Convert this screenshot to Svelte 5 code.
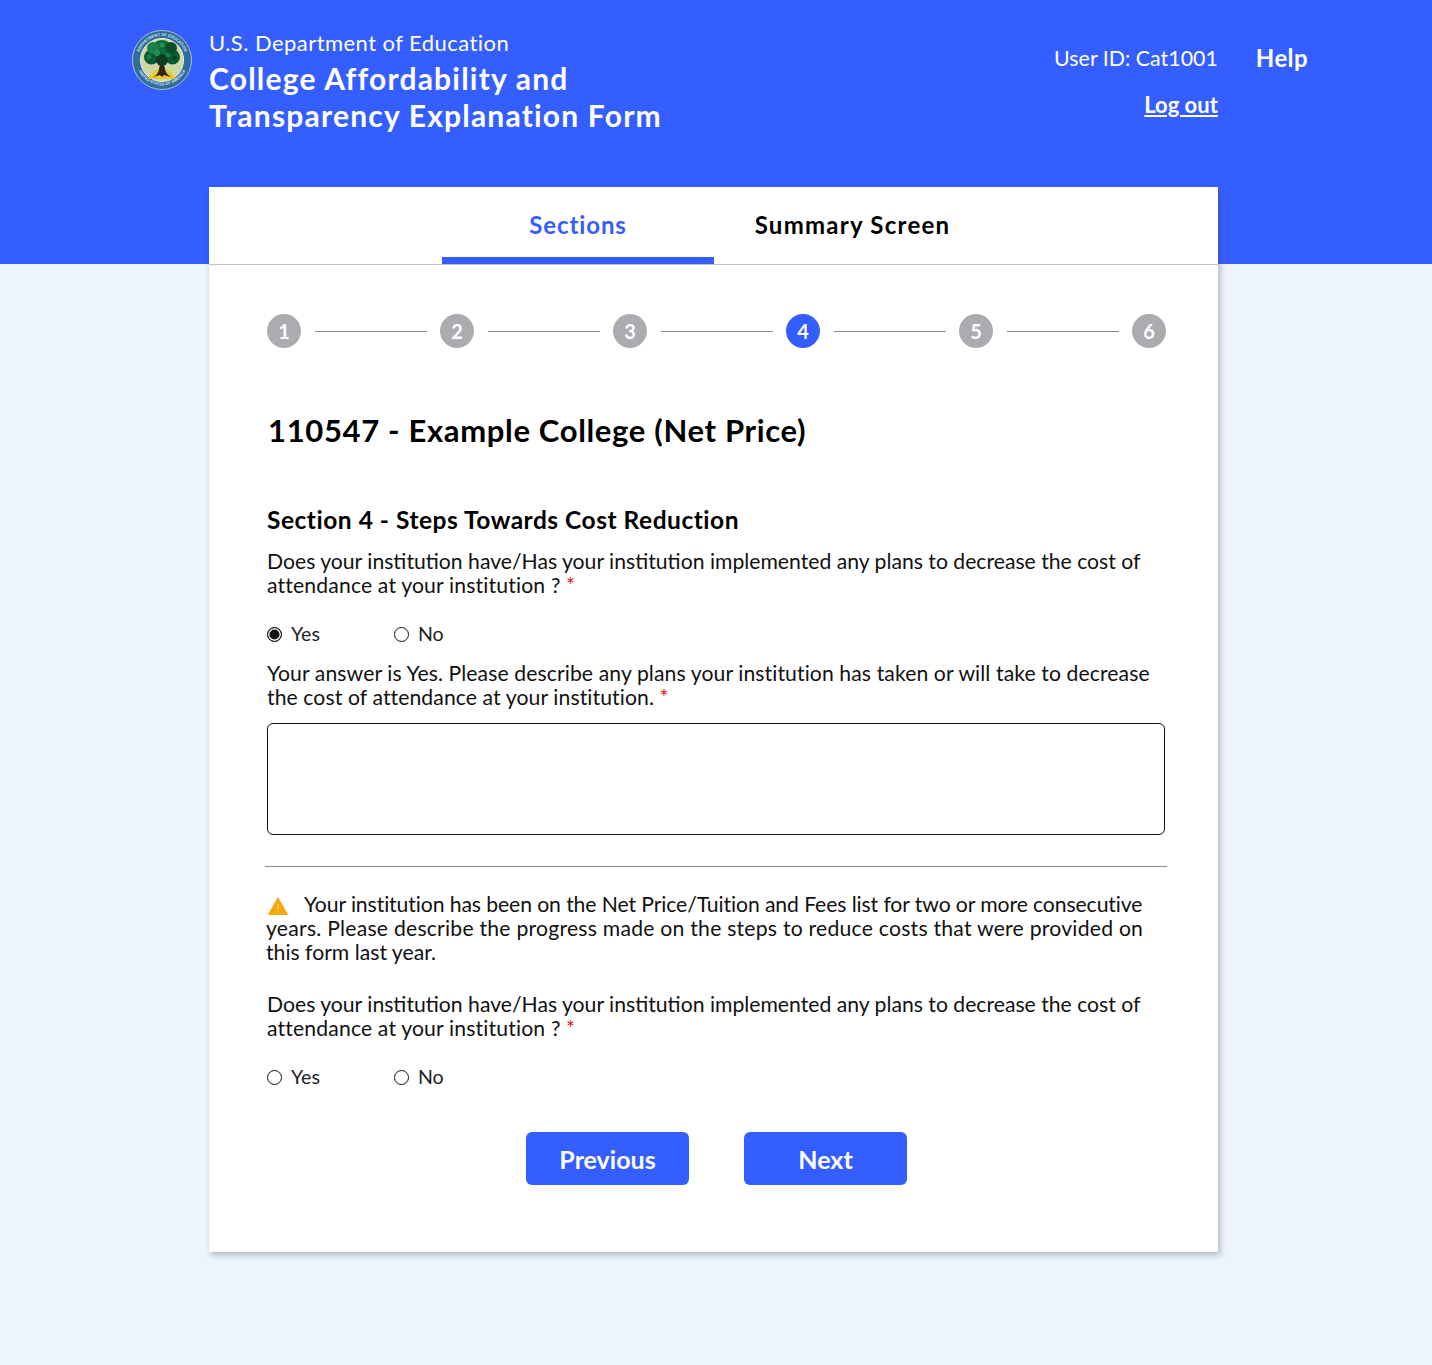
<script lang="ts">
	const steps = [1, 2, 3, 4, 5, 6];
	const current = 4;
	const question = 'Does your institution have/Has your institution implemented any plans to decrease the cost of';
	const questionEnd = 'attendance at your institution ?';
</script>

<div class="page">
	<header class="banner">
		<div class="banner__inner">
			<svg class="seal" viewBox="0 0 60 60" aria-hidden="true">
				<defs>
					<path id="seal-top" d="M9.2 42a24 24 0 1 1 41.6 0" />
					<path id="seal-bottom" d="M5 36a25.8 25.8 0 0 0 50 0" />
				</defs>
				<circle cx="30" cy="30" r="29.5" fill="#2f6d9c" stroke="#a9bfcc" stroke-width="1" />
				<circle cx="30" cy="30" r="21.5" fill="#cdd8a6" stroke="#eef2df" stroke-width="1" />
				<text class="seal__text" text-anchor="middle"><textPath href="#seal-top" startOffset="50%">DEPARTMENT OF EDUCATION</textPath></text>
				<text class="seal__text" text-anchor="middle"><textPath href="#seal-bottom" startOffset="50%">UNITED STATES OF AMERICA</textPath></text>
				<path d="M16 49h28l-5-7-6-3-2-8h-3l-2 8-5 3z" fill="#e6c92f" />
				<path d="M21 47c5-2 7-7 7-17h4c0 10 2 14 7 17l-7-2-2 2-2-2z" fill="#33241a" />
				<circle cx="30" cy="21" r="11" fill="#0e6b3a" />
				<circle cx="19.5" cy="27" r="7.5" fill="#0c5a32" />
				<circle cx="40.5" cy="27" r="7.5" fill="#0c5a32" />
				<circle cx="21" cy="18" r="6" fill="#1a8048" />
				<circle cx="39" cy="18" r="6" fill="#0a4f2b" />
				<circle cx="30" cy="30" r="6" fill="#0a3d22" />
				<circle cx="25" cy="23" r="3" fill="#23914f" />
				<circle cx="36" cy="25" r="2.5" fill="#1a8048" />
				<circle cx="30" cy="15" r="2.5" fill="#23914f" />
				<circle cx="17" cy="27" r="2.5" fill="#1a8048" />
				<circle cx="43" cy="28" r="2" fill="#0a3d22" />
			</svg>
			<div class="title">
				<p class="title__dept">U.S. Department of Education</p>
				<h1 class="title__form">College Affordability and<br />Transparency Explanation Form</h1>
			</div>
			<div class="account">
				<span class="account__user">User ID: Cat1001</span>
				<a class="account__logout" href="#logout">Log out</a>
			</div>
			<a class="help" href="#help">Help</a>
		</div>
	</header>

	<main class="card">
		<nav class="tabs">
			<a class="tab tab--active" href="#sections">Sections</a>
			<a class="tab tab--summary" href="#summary">Summary Screen</a>
		</nav>

		<div class="body">
			<ol class="stepper">
				{#each steps as step, i}
					{#if i > 0}<li class="stepper__line" aria-hidden="true"></li>{/if}
					<li class="stepper__dot" class:stepper__dot--on={step === current}>{step}</li>
				{/each}
			</ol>

			<h2 class="college">110547 - Example College (Net Price)</h2>
			<h3 class="section">Section 4 - Steps Towards Cost Reduction</h3>

			<p class="copy">
				{question}<br /><span class="wide">{questionEnd}</span> <span class="req">*</span>
			</p>

			<div class="radios radios--first">
				<label class="radio"><span class="radio__mark radio__mark--on"></span>Yes</label>
				<label class="radio"><span class="radio__mark"></span>No</label>
			</div>

			<p class="copy copy--answer">
				Your answer is Yes. Please describe any plans your institution has taken or will take to decrease<br />
				the cost of attendance at your institution. <span class="req">*</span>
			</p>

			<div class="answer" role="textbox" aria-label="Description"></div>

			<hr class="rule" />

			<p class="copy copy--notice">
				<svg class="warn" viewBox="0 0 20 18" aria-hidden="true">
					<path d="M10 .8 19.6 17.6H.4z" fill="#f5a70f" stroke="#f5a70f" stroke-linejoin="round" />
					<path d="M10 7v5.5M10 14v1.4" stroke="#ffd98a" stroke-width="1.2" />
				</svg><span class="tight">Your institution has been on the Net Price/Tuition and Fees list for two or more consecutive</span><br />
				<span class="loose">years. Please describe the progress made on the steps to reduce costs that were provided on</span><br />
				this form last year.
			</p>

			<p class="copy copy--second">
				{question}<br /><span class="wide">{questionEnd}</span> <span class="req">*</span>
			</p>

			<div class="radios radios--second">
				<label class="radio"><span class="radio__mark"></span>Yes</label>
				<label class="radio"><span class="radio__mark"></span>No</label>
			</div>

			<div class="actions">
				<button class="btn" type="button">Previous</button>
				<button class="btn" type="button">Next</button>
			</div>
		</div>
	</main>
</div>

<style>
	:global(body) {
		margin: 0;
		background: #edf4fd;
	}

	.page {
		position: relative;
		min-height: 1365px;
		font-family: 'Lato', 'Liberation Sans', sans-serif;
		color: #000;
	}

	.banner {
		height: 264px;
		background: #345eff;
		color: #fff;
		box-sizing: border-box;
		padding: 30px 124px 0 132px;
	}

	.banner__inner {
		display: flex;
		align-items: flex-start;
	}

	.seal {
		width: 60px;
		height: 60px;
		flex: none;
	}

	.seal__text {
		font-family: 'Liberation Sans', sans-serif;
		font-size: 4px;
		font-weight: 700;
		fill: #d5e3ea;
	}

	.title {
		margin-left: 17px;
		flex: 1;
	}

	.title__dept {
		margin: 0;
		font-size: 22px;
		line-height: 26px;
		letter-spacing: 0.45px;
	}

	.title__form {
		margin: 4px 0 0;
		font-size: 30px;
		line-height: 37px;
		font-weight: 700;
		letter-spacing: 1.2px;
	}

	.account {
		display: flex;
		flex-direction: column;
		align-items: flex-end;
		padding-top: 15px;
	}

	.account__user {
		font-size: 21.4px;
		line-height: 26px;
	}

	.account__logout {
		margin-top: 21px;
		color: #fff;
		font-size: 22px;
		line-height: 26px;
		font-weight: 700;
	}

	.help {
		margin: 13px 0 0 38px;
		color: #fff;
		font-size: 24px;
		line-height: 30px;
		font-weight: 700;
		letter-spacing: 0.4px;
		text-decoration: none;
	}

	.card {
		position: absolute;
		left: 209px;
		top: 187px;
		width: 1009px;
		height: 1065px;
		background: #fff;
		box-shadow: 2px 3px 6px rgba(60, 70, 90, 0.35);
	}

	.tabs {
		display: flex;
		height: 77px;
		padding-left: 233px;
		border-bottom: 1px solid #c4c4c4;
	}

	.tab {
		width: 272px;
		box-sizing: border-box;
		padding-top: 23px;
		text-align: center;
		font-size: 24px;
		line-height: 30px;
		font-weight: 700;
		letter-spacing: 0.9px;
		color: #000;
		text-decoration: none;
	}

	.tab--active {
		color: #345eff;
		border-bottom: 7px solid #345eff;
	}

	.tab--summary {
		width: 277px;
		letter-spacing: 1.25px;
	}

	.body {
		padding: 49px 52px 0 58px;
	}

	.stepper {
		display: flex;
		align-items: center;
		list-style: none;
		margin: 0;
		padding: 0;
	}

	.stepper__dot {
		flex: none;
		width: 34px;
		height: 34px;
		border-radius: 50%;
		background: #acacb0;
		color: #fff;
		font-size: 20px;
		font-weight: 700;
		line-height: 34px;
		text-align: center;
	}

	.stepper__dot--on {
		background: #345eff;
	}

	.stepper__line {
		flex: 1;
		height: 1px;
		margin: 0 13.5px;
		background: #8a8a8a;
	}

	.college {
		margin: 62px 0 0 1px;
		font-size: 31px;
		line-height: 40px;
		font-weight: 700;
		letter-spacing: 0.66px;
	}

	.section {
		margin: 54px 0 0;
		font-size: 24.5px;
		line-height: 32px;
		font-weight: 700;
		letter-spacing: 0.52px;
	}

	.copy {
		margin: 13px 0 0;
		font-size: 21.18px;
		line-height: 24px;
		color: #111;
	}

	.copy--answer {
		margin-top: 13px;
		letter-spacing: 0.09px;
	}

	.wide {
		letter-spacing: 0.15px;
	}

	.tight {
		letter-spacing: -0.1px;
	}

	.loose {
		letter-spacing: 0.23px;
	}

	.req {
		color: #e02020;
		font-size: 21px;
	}

	.radios {
		display: flex;
		gap: 74px;
		margin-top: 25px;
		margin-bottom: 15px;
	}

	.radios--second {
		margin-top: 25px;
		margin-bottom: 0;
	}

	.radio {
		display: flex;
		align-items: center;
		gap: 9px;
		font-size: 19.6px;
		line-height: 24px;
		color: #222;
	}

	.radio__mark {
		box-sizing: border-box;
		width: 15px;
		height: 15px;
		border-radius: 50%;
		border: 1.8px solid #111;
		background: #fff;
	}

	.radio__mark--on {
		background: #111;
		box-shadow: inset 0 0 0 1.4px #fff;
	}

	.answer {
		box-sizing: border-box;
		height: 112px;
		margin: 14px 1px 0 0;
		border: 1px solid #111;
		border-radius: 6px;
	}

	.rule {
		margin: 31px -1px 0 -2px;
		border: 0;
		height: 1px;
		background: #8f8f8f;
	}

	.copy--notice {
		margin: 25px -20px 0 -1px;
	}

	.warn {
		width: 20px;
		height: 18px;
		margin: 0 16px 0 2px;
		vertical-align: -3px;
	}

	.copy--second {
		margin-top: 28px;
	}

	.actions {
		display: flex;
		justify-content: center;
		gap: 55px;
		margin-top: 43px;
	}

	.btn {
		width: 163px;
		height: 53px;
		border: 0;
		border-radius: 6px;
		background: #345eff;
		color: #fff;
		font-family: inherit;
		font-size: 25px;
		font-weight: 700;
	}
</style>
